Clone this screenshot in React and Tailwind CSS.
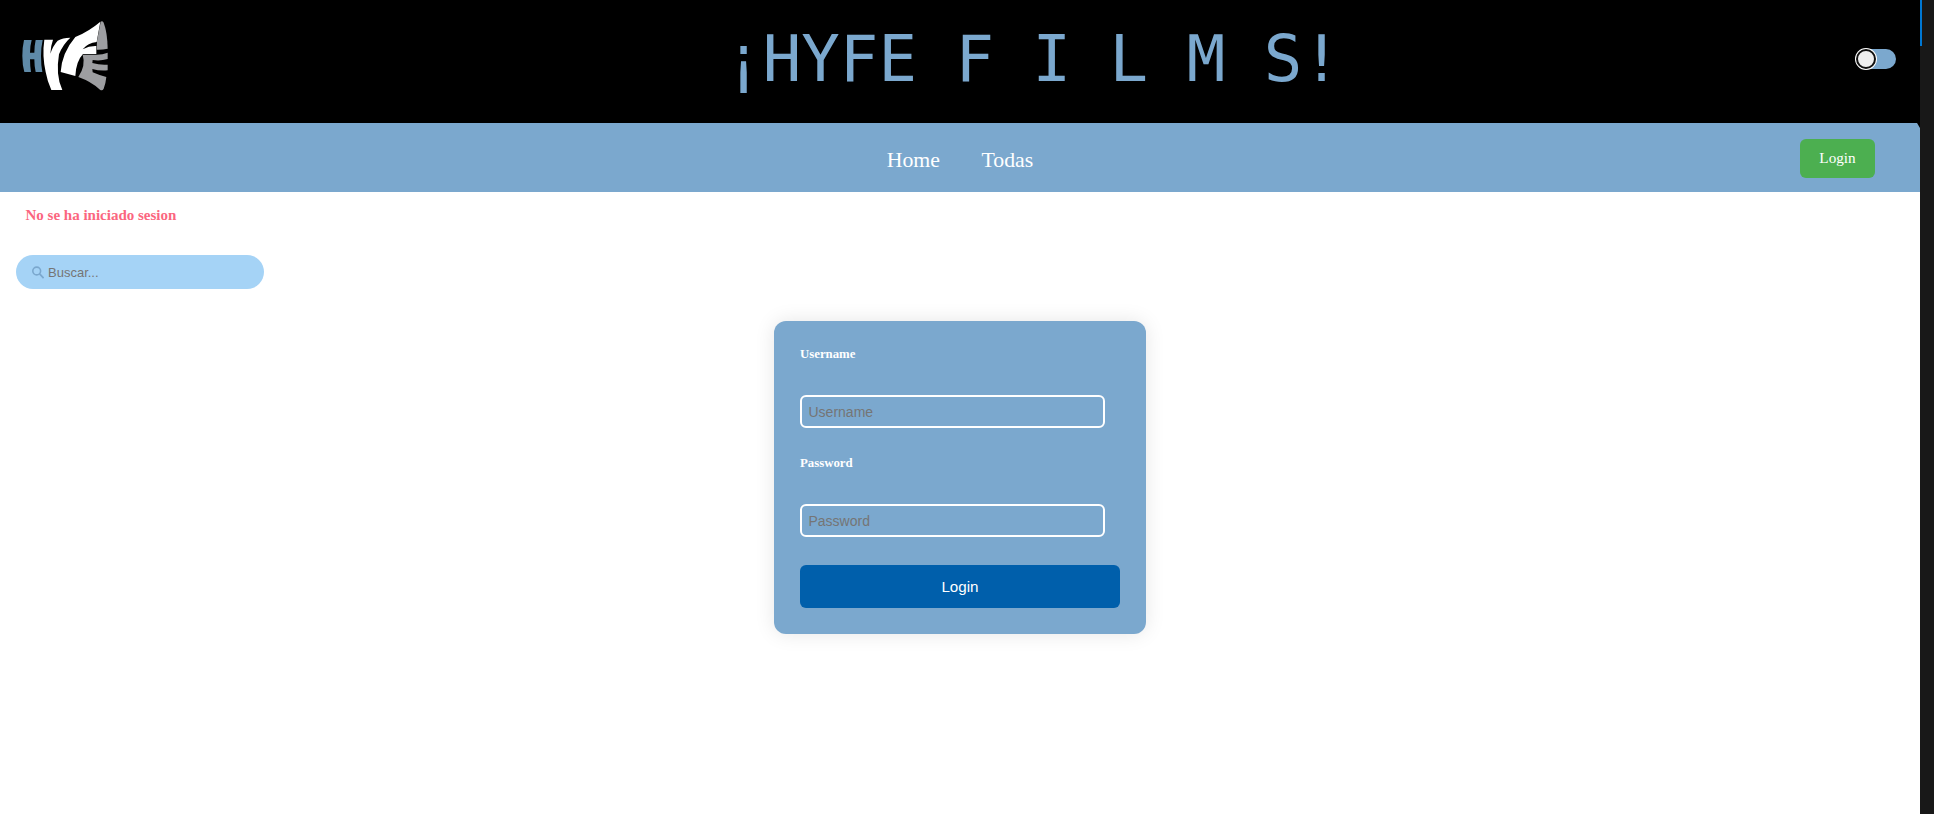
function Logo() {
  return (
    <svg className="h-[72px] w-[90px]" viewBox="60 60 270 216" aria-label="HYFE">
      <path fill="#5f8aa8" d="M72 120H95Q90 138 90 158H103Q103 138 107 120H128Q123 142 123 168Q123 195 127 216H107Q103 198 103 178H90Q90 198 93 216H73Q67 195 67 168Q67 142 72 120Z" />
      <path fill="#fff" d="M133 119H159Q152 138 151 161Q159 137 173 122Q188 113 211 113Q188 134 177 163Q172 192 174 220Q176 246 187 270H154Q142 244 137 216Q126 166 133 119Z" />
      <path fill="#fff" d="M182 216Q186 158 226 111Q267 94 301 65L290 126Q264 128 248 148Q268 137 289 138V162H249Q228 184 226 228Z" />
      <path fill="#9d9ea1" d="M302 65Q307 62 311 68Q322 96 323 146Q305 150 290 149L291 122Z" />
      <path fill="#9d9ea1" d="M248 164H290Q308 164 323 158V177Q300 184 278 180L277 189Q300 196 323 194V211Q298 213 277 207L278 217Q298 226 319 231Q317 252 311 266Q307 274 300 269Q274 245 235 231Q258 196 248 164Z" />
    </svg>
  );
}

function Toggle() {
  return (
    <button aria-label="Tema" className="flex h-5 w-10 items-center rounded-full bg-[#7ba8ce]">
      <span className="size-5 rounded-full border-2 border-[#101010] bg-[#efefef] ring-1 ring-white" />
    </button>
  );
}

function Field({ label, type }) {
  return (
    <label className="flex flex-col gap-[31px]">
      <span className="h-5 text-[12.8px] leading-5 font-bold text-white">{label}</span>
      <input
        type={type}
        placeholder={label}
        className="h-[33px] w-[305px] rounded-md border-2 border-white px-[6.5px] font-['Liberation_Sans',sans-serif] text-[14px] placeholder:text-[#757575]"
      />
    </label>
  );
}

export default function App() {
  return (
    <div className="flex h-[814px] w-[1934px] overflow-hidden bg-white font-['Liberation_Serif',serif]">
      <div className="w-[1920px]">
        <header className="flex h-[123px] items-center justify-between bg-black pr-6 pl-5">
          <div className="w-[90px] pb-[11px]"><Logo /></div>
          <h1 className="ml-[99px] pb-1 font-['DejaVu_Sans_Mono',monospace] text-[64px] leading-[75px] whitespace-pre text-[#7ba8ce]">¡HYFE F I L M S!</h1>
          <div className="pb-[5px]"><Toggle /></div>
        </header>

        <nav className="relative flex h-[69px] bg-[#7ba8ce] text-white">
          <div className="w-[120px]" />
          <div className="flex flex-1 justify-center gap-[41.5px] pt-6 text-[21.8px] leading-[26px]">
            <a>Home</a>
            <a>Todas</a>
          </div>
          <div className="w-[120px] pt-4">
            <button className="h-[39px] w-[75px] rounded-md bg-[#4caf50] text-[15.2px]">Login</button>
          </div>
          <svg className="absolute top-0 right-0 h-[5px] w-[3px]" viewBox="0 0 3 5"><path d="M0 0H3V5Z" /></svg>
        </nav>

        <p className="pt-[13px] pl-[25.5px] text-[15px] leading-5 font-bold text-[#fb6680]">No se ha iniciado sesion</p>

        <div className="mt-[30px] ml-4 flex h-[34px] w-[248px] items-center rounded-full bg-[#a5d3f6] pl-4">
          <svg className="h-[13px] w-3" viewBox="0 0 12 13" fill="none" stroke="#7ba8ce">
            <circle cx="4.7" cy="5" r="3.9" strokeWidth="1.6" />
            <path d="M7.6 7.9L11.6 12.1" strokeWidth="1.8" />
          </svg>
          <input placeholder="Buscar..." className="ml-1 w-[190px] pt-0.5 font-['Liberation_Sans',sans-serif] text-[13px] placeholder:text-[#757575]" />
        </div>

        <form className="mx-auto mt-8 flex h-[313px] w-[372px] flex-col rounded-xl bg-[#7ba8ce] px-[26px] pt-[23px] shadow-[0_0_20px_rgba(0,0,0,0.1)]">
          <Field label="Username" type="text" />
          <div className="mt-[25px]"><Field label="Password" type="password" /></div>
          <button type="button" className="mt-7 h-[43px] w-80 rounded-md bg-[#005fab] pt-px font-['Liberation_Sans',sans-serif] text-[15.2px] text-white">Login</button>
        </form>
      </div>
      <aside className="w-3.5 bg-[#181818]">
        <div className="h-[46px] w-0.5 bg-[#0078d4]" />
      </aside>
    </div>
  );
}
